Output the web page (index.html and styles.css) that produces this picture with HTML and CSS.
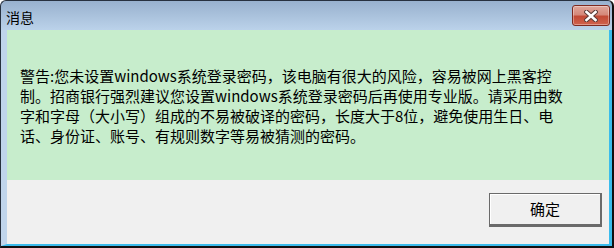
FILE: index.html
```html
<!DOCTYPE html>
<html>
	<head>
		<meta charset="UTF-8">
		<title>消息</title>
		<link rel="stylesheet" href="styles.css">
	</head>
	<body>
		<div class="window">
			<!--标题栏-->
			<div class="titlebar">
				<span class="title">消息</span>
				<a href="#" class="close">
					<svg width="14" height="12" viewBox="0 0 14 12">
						<path d="M2.5 2 L11.5 10 M11.5 2 L2.5 10" stroke="#5a3a36" stroke-width="4.6" stroke-linecap="square"/>
						<path d="M2.5 2 L11.5 10 M11.5 2 L2.5 10" stroke="#ffffff" stroke-width="2.6" stroke-linecap="square"/>
					</svg>
				</a>
			</div>
			<div class="client">
				<!--提示内容-->
				<div class="message">
					<p>警告:您未设置windows系统登录密码，该电脑有很大的风险，容易被网上黑客控制。招商银行强烈建议您设置windows系统登录密码后再使用专业版。请采用由数字和字母（大小写）组成的不易被破译的密码，长度大于8位，避免使用生日、电话、身份证、账号、有规则数字等易被猜测的密码。</p>
				</div>
				<!--按钮-->
				<div class="footer">
					<a href="#" class="ok">确定</a>
				</div>
			</div>
		</div>
	</body>
</html>
```

FILE: styles.css
```css
*{
	padding: 0;
	margin: 0;
}
a{
	text-decoration: none;
}
body{
	font-family: "Microsoft YaHei", "Noto Sans CJK SC", sans-serif;
	color: #000;
}
.window{
	width: 614px;
	height: 248px;
	box-sizing: border-box;
	border: 1px solid #27313f;
	border-right-width: 2px;
	border-bottom-width: 2px;
	border-bottom-color: #111;
	border-right-color: #111;
	border-radius: 6px 6px 0 0;
	background: linear-gradient(#98b1ce, #bbd2ea 29px, #bdd3ea);
	display: flex;
	flex-direction: column;
}
.titlebar{
	height: 29px;
	display: flex;
	align-items: flex-start;
	justify-content: space-between;
}
.titlebar .title{
	font-size: 14px;
	line-height: 18px;
	margin: 7px 0 0 5px;
}
.titlebar .close{
	width: 38px;
	height: 21px;
	margin: 4px 2px 0 0;
	box-sizing: border-box;
	border: 1px solid #7e2a20;
	border-radius: 3px;
	background: linear-gradient(#e0a79b, #d5887a 45%, #c24a36 55%, #d0624d);
	box-shadow: inset 0 0 0 1px rgba(255,255,255,0.35);
	display: flex;
	align-items: center;
	justify-content: center;
}
.client{
	flex: 1;
	display: flex;
	flex-direction: column;
	border-left: 6px solid #c0d5ec;
	border-right: 3px solid #3bbcec;
	border-bottom: 2px solid #3bbcec;
}
.message{
	height: 150px;
	background-color: #c7edcc;
	display: flex;
	align-items: center;
	padding: 0 46px 0 13px;
}
.message p{
	font-size: 15px;
	line-height: 20px;
	padding-top: 1px;
}
.footer{
	flex: 1;
	background-color: #f0f0f0;
	display: flex;
	justify-content: flex-end;
	align-items: flex-start;
	padding: 13px 7px 0 0;
}
.footer .ok{
	width: 113px;
	height: 34px;
	box-sizing: border-box;
	border: 1px solid #6a6a6a;
	border-right-width: 2px;
	border-bottom-width: 3px;
	background-color: #f0f0f0;
	box-shadow: inset 1px 1px 0 #fff;
	color: #000;
	font-size: 15px;
	line-height: 30px;
	text-align: center;
}
```
